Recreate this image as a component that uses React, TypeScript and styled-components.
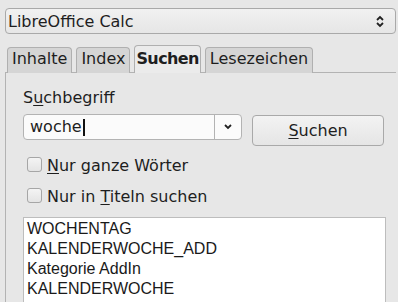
import React from 'react';
import styled, { createGlobalStyle } from 'styled-components';

const GlobalStyle = createGlobalStyle`
    html, body {
        margin: 0;
        padding: 0;
        background: #e7e7e7;
        overflow: hidden;
    }
    body {
        font-family: "DejaVu Sans", Verdana, sans-serif;
        font-size: 16px;
        color: #1e1e1e;
    }
`

const Page = styled.div`
    width: 398px;
    box-sizing: border-box;
    padding: 8px 2px 0 5px;
    display: flex;
    flex-direction: column;

    & > * {
        flex-shrink: 0;
    }
`

const ModuleCombo = styled.div`
    height: 26px;
    box-sizing: border-box;
    border: 1px solid #a9a9a9;
    border-radius: 4px;
    background: linear-gradient(#f1f1f1, #e6e6e6);
    display: flex;
    align-items: center;
    justify-content: space-between;
    padding: 0 11px 0 2px;
    line-height: 19px;
`

const TabBar = styled.div`
    display: flex;
    align-items: flex-end;
    gap: 4px;
    margin-top: 11px;
    padding-left: 2px;
    position: relative;
    z-index: 1;
    margin-bottom: -1px;
`

const Tab = styled.div<{ $active?: boolean }>`
    box-sizing: border-box;
    height: ${p => (p.$active ? 28 : 26)}px;
    padding: 0 ${p => (p.$active ? 1 : 4)}px;
    padding-top: ${p => (p.$active ? 3 : 1)}px;
    border: 1px solid #b0b0b0;
    border-bottom: none;
    border-radius: 4px 4px 0 0;
    background: ${p => (p.$active ? '#ebebeb' : '#d5d5d5')};
    font-weight: ${p => (p.$active ? 'bold' : 'normal')};
    letter-spacing: ${p => (p.$active ? '-0.6px' : '0')};
    line-height: 19px;
`

const Panel = styled.div`
    border-top: 1px solid #b3b3b3;
    border-left: 1px solid #b3b3b3;
    padding: 15px 0 0 17px;
    display: flex;
    flex-direction: column;

    & > * {
        flex-shrink: 0;
    }
`

const FieldLabel = styled.div`
    line-height: 19px;
`

const SearchRow = styled.div`
    display: flex;
    align-items: flex-start;
    gap: 10px;
    margin-top: 7px;
`

const TermInput = styled.div`
    width: 219px;
    height: 26px;
    box-sizing: border-box;
    border: 1px solid #b3b3b3;
    border-radius: 4px;
    background: #fbfbfb;
    display: flex;
`

const TermText = styled.div`
    flex: 1;
    padding-left: 6px;
    line-height: 24px;
    display: flex;
    align-items: center;
`

const Caret = styled.span`
    display: inline-block;
    width: 2px;
    height: 17px;
    background: #111;
    margin-left: 1px;
`

const DropButton = styled.div`
    width: 26px;
    border-left: 1px solid #b3b3b3;
    display: flex;
    align-items: center;
    justify-content: center;
`

const PushButton = styled.div`
    width: 132px;
    height: 31px;
    margin-top: 1px;
    box-sizing: border-box;
    border: 1px solid #a9a9a9;
    border-radius: 4px;
    background: linear-gradient(#f3f3f3, #e5e5e5);
    display: flex;
    align-items: center;
    justify-content: center;
    line-height: 19px;
`

const CheckRow = styled.label<{ $gap: number }>`
    display: flex;
    align-items: center;
    gap: 5px;
    margin-top: ${p => p.$gap}px;
    margin-left: 4px;
    line-height: 19px;
`

const CheckBox = styled.span`
    width: 15px;
    height: 15px;
    box-sizing: border-box;
    border: 1px solid #a6a6a6;
    border-radius: 3px;
    background: linear-gradient(#f4f4f4, #e4e4e4);
    margin-top: -2px;
`

const Mnemonic = styled.u`
    text-decoration: underline;
    text-underline-offset: 2px;
    text-decoration-thickness: 1px;
`

const ResultList = styled.div`
    width: 363px;
    height: 100px;
    box-sizing: border-box;
    margin-top: 11px;
    border: 1px solid #bdbdbd;
    background: #ffffff;
    padding: 1px 3px;
    font-family: "Liberation Sans", Arial, sans-serif;
    font-size: 16px;
    line-height: 20px;
    color: #1a1a1a;
`

const results = ['WOCHENTAG', 'KALENDERWOCHE_ADD', 'Kategorie AddIn', 'KALENDERWOCHE'];

const App = (): JSX.Element => {
    return (
        <Page>
            <GlobalStyle />
            <ModuleCombo>
                <span>LibreOffice Calc</span>
                <svg width="8" height="13" viewBox="0 0 8 13">
                    <path d="M1 5 L4 2 L7 5" fill="none" stroke="#222" strokeWidth="1.8" />
                    <path d="M1 8 L4 11 L7 8" fill="none" stroke="#222" strokeWidth="1.8" />
                </svg>
            </ModuleCombo>
            <TabBar>
                <Tab>Inhalte</Tab>
                <Tab>Index</Tab>
                <Tab $active>Suchen</Tab>
                <Tab>Lesezeichen</Tab>
            </TabBar>
            <Panel>
                <FieldLabel>S<Mnemonic>u</Mnemonic>chbegriff</FieldLabel>
                <SearchRow>
                    <TermInput>
                        <TermText>woche<Caret /></TermText>
                        <DropButton>
                            <svg width="8" height="6" viewBox="0 0 8 6">
                                <path d="M1 1 L4 4 L7 1" fill="none" stroke="#222" strokeWidth="1.8" />
                            </svg>
                        </DropButton>
                    </TermInput>
                    <PushButton><Mnemonic>S</Mnemonic>uchen</PushButton>
                </SearchRow>
                <CheckRow $gap={10}>
                    <CheckBox />
                    <span><Mnemonic>N</Mnemonic>ur ganze Wörter</span>
                </CheckRow>
                <CheckRow $gap={12}>
                    <CheckBox />
                    <span>Nur in <Mnemonic>T</Mnemonic>iteln suchen</span>
                </CheckRow>
                <ResultList>
                    {results.map(r => <div key={r}>{r}</div>)}
                </ResultList>
            </Panel>
        </Page>
    );
};

export default App;
